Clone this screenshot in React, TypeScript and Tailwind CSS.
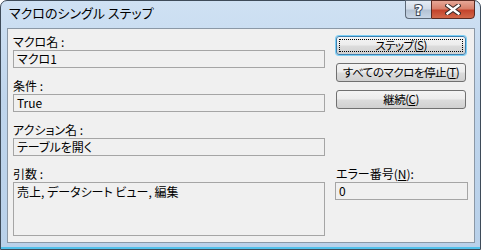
import React from 'react';

const font = "font-['Noto_Sans_CJK_JP','Noto_Sans',sans-serif] [font-feature-settings:'palt']";

const Field: React.FC<{ value: string; className?: string }> = ({ value, className = '' }) => (
  <div
    className={`border border-[#a5a5a5] bg-[#f0f0f0] pl-[3px] text-[12px] leading-[16px] text-black ${className}`}
  >
    {value}
  </div>
);

const Button: React.FC<{ children: React.ReactNode; isDefault?: boolean }> = ({ children, isDefault }) => (
  <button
    className={`relative h-[19px] w-[130px] rounded-[3px] border text-[11.5px] leading-[15px] tracking-[-0.5px] text-black
      bg-[linear-gradient(to_bottom,#f4f4f4_0%,#ececec_48%,#dcdcdc_52%,#d0d0d0_100%)]
      ${isDefault ? 'border-[#3c7fb1] shadow-[0_0_0_1px_#7ed0f5]' : 'border-[#707070]'}`}
  >
    {isDefault && (
      <span className="pointer-events-none absolute inset-[2px] border border-dotted border-black" />
    )}
    <span className="relative">{children}</span>
  </button>
);

const App: React.FC = () => {
  return (
    <div className={`h-[250px] w-[481px] bg-white ${font}`}>
      <div className="flex h-[250px] w-[481px] flex-col rounded-t-[7px] border border-[#3e4b59] bg-[linear-gradient(to_bottom,#cfe1f3_0%,#bfd5ec_40%,#b9d1ea_100%)] pr-[5px] pb-[6px] pl-[6px] shadow-[inset_0_-2px_0_#4fc0ea]">
        {/* title bar */}
        <div className="flex h-[27px] shrink-0 items-start justify-between">
          <div className="pt-[3px] pl-[2px] text-[13px] leading-[18px] text-black">
            マクロのシングル ステップ
          </div>
          <div className="-mt-px flex">
            <div className="flex h-[19px] w-[26px] items-center justify-center rounded-bl-[4px] border border-r-0 border-[#5d6a78] bg-[linear-gradient(to_bottom,#e4ecf5_0%,#d2dce8_45%,#b4c3d4_55%,#c8d6e6_100%)] font-['DejaVu_Sans',sans-serif] text-[14px] font-bold leading-none text-white [-webkit-text-stroke:2px_#3a4654] [paint-order:stroke_fill]">
              ?
            </div>
            <div className="flex h-[19px] w-[44px] items-center justify-center rounded-br-[4px] border border-[#5a2a22] bg-[linear-gradient(to_bottom,#e6a797_0%,#d8806b_45%,#c4442c_55%,#d2684a_100%)]">
              <svg width="16" height="11" viewBox="0 0 16 11">
                <path d="M2.5 1.5 L13.5 9.5 M13.5 1.5 L2.5 9.5" stroke="#3a2a28" strokeWidth="4.4" strokeLinecap="square" />
                <path d="M2.5 1.5 L13.5 9.5 M13.5 1.5 L2.5 9.5" stroke="#ffffff" strokeWidth="2.4" strokeLinecap="square" />
              </svg>
            </div>
          </div>
        </div>

        {/* client area */}
        <div className="flex h-[215px] w-[468px] shrink-0 border border-[#8b98a6] bg-[#f0f0f0] text-black">
          <div className="flex w-[318px] flex-col pt-[5px] pl-[5px]">
            <div className="text-[12px] leading-[16px]">マクロ名 :</div>
            <Field value="マクロ1" className="h-[18px] w-[312px]" />
            <div className="mt-[10px] text-[12px] leading-[16px]">条件 :</div>
            <Field value="True" className="h-[18px] w-[312px]" />
            <div className="mt-[10px] text-[12px] leading-[16px]">アクション名 :</div>
            <Field value="テーブルを開く" className="h-[18px] w-[312px]" />
            <div className="mt-[10px] text-[12px] leading-[16px]">引数 :</div>
            <Field value="売上, データシート ビュー, 編集" className="h-[54px] w-[312px] pt-px" />
          </div>

          <div className="ml-[9px] flex w-[133px] flex-col pt-[7px]">
            <div className="flex flex-col gap-[8px] pl-px">
              <Button isDefault>
                ステップ(<span className="underline">S</span>)
              </Button>
              <Button>
                すべてのマクロを停止(<span className="underline">T</span>)
              </Button>
              <Button>
                継続(<span className="underline">C</span>)
              </Button>
            </div>
            <div className="mt-[57px] pl-px text-[12px] leading-[16px]">
              エラー番号(<span className="underline">N</span>):
            </div>
            <Field value="0" className="h-[18px] w-[133px]" />
          </div>
        </div>
      </div>
    </div>
  );
};

export default App;
